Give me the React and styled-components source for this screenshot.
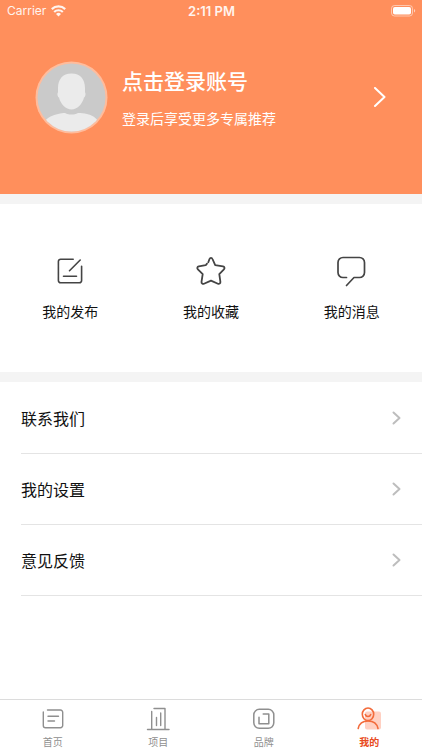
import React from "react";
import styled, { createGlobalStyle } from "styled-components";

const GlobalStyle = createGlobalStyle`
  * { box-sizing: border-box; }
  body {
    margin: 0;
    background: #fff;
    color: #111;
    font-family: "Noto Sans CJK SC", "Liberation Sans", sans-serif;
  }
  button { font: inherit; color: inherit; border: 0; padding: 0; background: none; cursor: pointer; }
  a { color: inherit; text-decoration: none; }
  svg { display: block; flex: none; }
`;

const Page = styled.div`
  min-height: 100vh;
  display: flex;
  flex-direction: column;
`;

const Header = styled.header`
  background: #ff8f5c;
  color: #fff;
  padding-bottom: 60px;
`;

const StatusBar = styled.div`
  display: grid;
  grid-template-columns: 1fr auto 1fr;
  align-items: center;
  height: 22px;
  padding: 0 6px 0 7px;
  font: 12px/22px Inter, sans-serif;
`;

const Carrier = styled.span`
  display: flex;
  align-items: center;
  gap: 5px;
  opacity: 0.9;
`;

const Clock = styled.time`
  font-size: 13px;
  font-weight: 600;
  opacity: 0.9;
`;

const BatterySlot = styled.span`
  justify-self: end;
`;

const Profile = styled.button`
  display: flex;
  align-items: center;
  width: 100%;
  margin-top: 39px;
  padding: 0 35px;
  gap: 14px;
  text-align: left;
`;

const ProfileText = styled.span`
  flex: 1;
  display: flex;
  flex-direction: column;
  gap: 14px;
  padding-top: 1px;
`;

const ProfileTitle = styled.span`
  font-size: 21px;
  line-height: 26px;
  font-weight: 500;
`;

const ProfileHint = styled.span`
  font-size: 14px;
  line-height: 22px;
`;

const Main = styled.main`
  flex: 1;
`;

const Shortcuts = styled.nav`
  display: grid;
  grid-template-columns: repeat(3, 1fr);
  padding: 51px 0;
  border: solid #f4f4f4;
  border-width: 10px 0;
`;

const Shortcut = styled.a`
  display: flex;
  flex-direction: column;
  align-items: center;
  gap: 14px;
  font-size: 14px;
  line-height: 20px;
`;

const Menu = styled.ul`
  list-style: none;
  margin: 0;
  padding: 1px 0 0 21px;
`;

const MenuLink = styled.a`
  display: flex;
  align-items: center;
  justify-content: space-between;
  height: 71px;
  padding-right: 21px;
  border-bottom: 1px solid #e4e4e4;
  font-size: 16px;
  line-height: 24px;
`;

const TabBar = styled.nav`
  display: grid;
  grid-template-columns: repeat(4, 1fr);
  border-top: 1px solid #dcdcdc;
  padding: 6px 0 1px;
`;

const Tab = styled.a`
  display: flex;
  flex-direction: column;
  align-items: center;
  gap: 2px;
  font-size: 10px;
  line-height: 15px;
  font-weight: ${(p) => (p.$active ? 700 : 400)};
  color: ${(p) => (p.$active ? "#e84a20" : "#8f8f8f")};
`;

const Stroke = styled.svg.attrs({ fill: "none", "aria-hidden": true })`
  stroke: ${(p) => p.$color || "currentColor"};
  stroke-width: ${(p) => p.$weight || 2};
  stroke-linecap: round;
  stroke-linejoin: round;
`;

function WifiIcon() {
  return (
    <svg width="15" height="12" viewBox="0 0 15 12" fill="none" stroke="#fff" strokeWidth="2.2" aria-hidden="true">
      <path d="M.8 4.1a9.600 9.600 0 0 1 13.400 0" />
      <path d="M3.200 7a6.200 6.200 0 0 1 8.600 0" />
      <path d="M7.500 11.600 5 9a3.600 3.600 0 0 1 5 0Z" fill="#fff" stroke="none" />
    </svg>
  );
}

function BatteryIcon() {
  return (
    <svg width="25" height="12" viewBox="0 0 25 12" aria-hidden="true">
      <rect x=".5" y=".5" width="21" height="10.5" rx="3" fill="none" stroke="#fff" strokeOpacity=".5" />
      <rect x="2" y="2" width="18" height="7.5" rx="1.8" fill="#fff" />
      <path d="M23 4v3.500c1.600-.6 1.600-2.900 0-3.500Z" fill="#fff" fillOpacity=".6" />
    </svg>
  );
}

function Avatar() {
  return (
    <svg width="73" height="73" viewBox="0 0 73 73" aria-hidden="true">
      <defs>
        <clipPath id="avatar-disc"><circle cx="36.5" cy="36.5" r="34" /></clipPath>
      </defs>
      <circle cx="36.5" cy="36.5" r="36" fill="#ffbc9c" />
      <g clipPath="url(#avatar-disc)">
        <rect width="73" height="73" fill="#cacaca" />
        <path d="M9 61c4-5 9-7 14-8 3-1 5-1 7-1 4 2 9 2 13 0 3 0 6 0 9 1 5 1 8 3 12 8v12H9Z" fill="#ebebeb" />
        <path d="M36.500 12.500c9 0 13.500 6 13.500 14.500v4.500c1 .4.600 4.500-1 5C47.500 43 42 48.500 36.500 48.500S25.500 43 24 36.500c-1.600-.5-2-4.600-1-5V27c0-8.500 4.500-14.500 13.500-14.500Z" fill="#ebebeb" />
      </g>
    </svg>
  );
}

function BigChevron() {
  return (
    <Stroke width="14" height="22" viewBox="0 0 14 22">
      <path d="m2 1 9.500 9L2 19" />
    </Stroke>
  );
}

function RowChevron() {
  return (
    <Stroke width="9" height="14" viewBox="0 0 9 14" $color="#bdbdbd">
      <path d="m1.500 1.500 6 5.500-6 5.500" />
    </Stroke>
  );
}

function PublishIcon() {
  return (
    <Stroke width="32" height="32" viewBox="0 0 32 32" $color="#444" $weight={1.6}>
      <path d="M19.200 4.200H6.600A2.200 2.200 0 0 0 4.400 6.400v19.200a2.200 2.200 0 0 0 2.200 2.200h18.800a2.200 2.200 0 0 0 2.200-2.200V11.200M26.200 5 15.500 15.700M9.500 21.300h13" />
    </Stroke>
  );
}

function StarIcon() {
  return (
    <Stroke width="32" height="32" viewBox="0 0 32 32" $color="#444" $weight={1.8}>
      <path d="M13.300 7.200 14.500 4c.6-1.500 2.400-1.500 3 0l2.700 6.200 7.800 1.100c1.500.3 2 1.900.9 3l-4.600 4.800 1.100 7.800c.2 1.500-1.200 2.400-2.500 1.800L16 25.600l-7 3.100c-1.300.6-2.700-.4-2.500-1.800l1.200-7.800-4.800-4.800c-1.100-1.100-.6-2.700.9-3l6.900-1.100 1.300-1.600" />
    </Stroke>
  );
}

function MessageIcon() {
  return (
    <Stroke width="32" height="32" viewBox="0 0 32 32" $color="#444" $weight={1.7}>
      <path d="M10.500 22.500H7a5 5 0 0 1-5-5V7.500a5 5 0 0 1 5-5h16.500a5 5 0 0 1 5 5v10a5 5 0 0 1-5 5H18L10.500 30.500" />
    </Stroke>
  );
}

function HomeIcon() {
  return (
    <Stroke width="26" height="26" viewBox="0 0 26 26" $weight={1.4}>
      <path d="M7.500 4h13a2.200 2.200 0 0 1 2.200 2.200v13.300a2.200 2.200 0 0 1-2.200 2.200H5.500a2.200 2.200 0 0 1-2.200-2.200V6M8 10.200h10.500M8 15h6.500" />
    </Stroke>
  );
}

function ProjectIcon() {
  return (
    <Stroke width="26" height="26" viewBox="0 0 26 26" $weight={1.4}>
      <path d="M9 2.500h11v21M6.700 23.500V5.500M2.500 23.500h21.500M11.500 19.500v-8M15.700 19.500V7" />
    </Stroke>
  );
}

function BrandIcon() {
  return (
    <Stroke width="26" height="26" viewBox="0 0 26 26" $weight={1.5}>
      <rect x="2.800" y="3.300" width="20" height="19" rx="5.500" />
      <path d="M8 11.200v6.500h9.800V8h-5.600" />
    </Stroke>
  );
}

function MineIcon() {
  return (
    <Stroke width="26" height="26" viewBox="0 0 26 26" $color="#f36b3b" $weight={1.6}>
      <rect x="9" y="5.500" width="16" height="18" rx="2" fill="#ffd0c2" stroke="none" />
      <ellipse cx="12" cy="8.300" rx="5.700" ry="6.300" />
      <path d="M9.300 8.500c.7 2.700 4.700 2.700 5.400 0M2.200 22.500c1-5 4.800-7.500 9.800-7.500s9 2.500 10 7.500" />
    </Stroke>
  );
}

const shortcuts = [
  { label: "我的发布", Icon: PublishIcon },
  { label: "我的收藏", Icon: StarIcon },
  { label: "我的消息", Icon: MessageIcon },
];

const menu = ["联系我们", "我的设置", "意见反馈"];

const tabs = [
  { label: "首页", Icon: HomeIcon },
  { label: "项目", Icon: ProjectIcon },
  { label: "品牌", Icon: BrandIcon },
  { label: "我的", Icon: MineIcon, active: true },
];

export default function App() {
  return (
    <Page>
      <GlobalStyle />
      <Header>
        <StatusBar>
          <Carrier>Carrier <WifiIcon /></Carrier>
          <Clock>2:11 PM</Clock>
          <BatterySlot><BatteryIcon /></BatterySlot>
        </StatusBar>
        <Profile type="button">
          <Avatar />
          <ProfileText>
            <ProfileTitle>点击登录账号</ProfileTitle>
            <ProfileHint>登录后享受更多专属推荐</ProfileHint>
          </ProfileText>
          <BigChevron />
        </Profile>
      </Header>
      <Main>
        <Shortcuts>
          {shortcuts.map(({ label, Icon }) => (
            <Shortcut href="#" key={label}>
              <Icon />
              {label}
            </Shortcut>
          ))}
        </Shortcuts>
        <Menu>
          {menu.map((label) => (
            <li key={label}>
              <MenuLink href="#">{label}<RowChevron /></MenuLink>
            </li>
          ))}
        </Menu>
      </Main>
      <TabBar>
        {tabs.map(({ label, Icon, active }) => (
          <Tab href="#" key={label} $active={active} aria-current={active ? "page" : undefined}>
            <Icon />
            {label}
          </Tab>
        ))}
      </TabBar>
    </Page>
  );
}
